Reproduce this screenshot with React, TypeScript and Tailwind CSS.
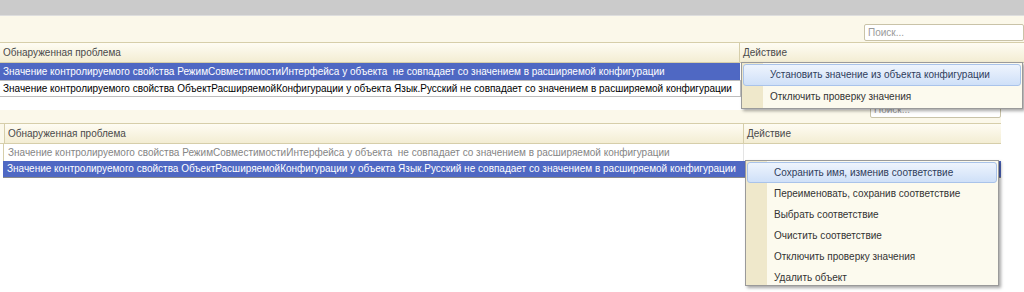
import { FC } from "react";

const font = "font-['Liberation_Sans',Arial,sans-serif]";

const ROW_A =
  "Значение контролируемого свойства РежимСовместимостиИнтерфейса у объекта  не совпадает со значением в расширяемой конфигурации";
const ROW_B =
  "Значение контролируемого свойства ОбъектРасширяемойКонфигурации у объекта Язык.Русский не совпадает со значением в расширяемой конфигурации";

const headerBg =
  "bg-[linear-gradient(to_bottom,#fefcf3,#f3edd3)] border-y border-[#d6ceaa]";

type MenuProps = { items: string[]; rowH: number };

const Menu: FC<MenuProps> = ({ items, rowH }) => (
  <div className="relative h-full border border-[#9a9a9a] bg-[#fcfaee] shadow-[2px_2px_3px_rgba(0,0,0,0.35)]">
    {/* left strip of the menu */}
    <div className="absolute left-0 top-0 bottom-0 w-[21px] bg-[#efe8cb]" />
    <div className="relative flex flex-col p-[1px]">
      {items.map((t, i) => (
        <div
          key={t}
          style={{ height: rowH }}
          className={
            i === 0
              ? "flex items-center pl-[26px] rounded-[3px] border border-[#a9c3ea] bg-[linear-gradient(to_bottom,#eef4fd,#cfe0f8)] text-[#2f3d5c]"
              : "flex items-center pl-[27px] text-[#333]"
          }
        >
          {t}
        </div>
      ))}
    </div>
  </div>
);

const App: FC = () => {
  return (
    <div
      className={`${font} relative w-[1024px] h-[292px] overflow-hidden bg-white text-[10px] leading-none whitespace-pre`}
    >
      {/* first form */}
      <div className="relative h-[101px]">
        <div className="h-[16px] bg-[#cbcbcb] border-b border-[#dedede]" />
        <div className="h-[26px] bg-[#fbf8ea] flex justify-end items-start pt-[8px]">
          <div className="w-[160px] h-[17px] bg-white border border-[#c9c3a8] rounded-[2px] flex items-center pl-[3px] text-[#9a9a9a]">
            Поиск...
          </div>
        </div>
        <div className={`h-[21px] flex ${headerBg} text-[#4a4a4a]`}>
          <div className="w-[740px] flex items-center pl-[3px] border-r border-[#d6ceaa]">
            Обнаруженная проблема
          </div>
          <div className="flex-1 flex items-center pl-[3px]">Действие</div>
        </div>
        <div className="h-[17px] w-[740px] flex items-center pl-[3px] bg-[#4f68c3] text-white">
          {ROW_A}
        </div>
        <div className="h-[17px] w-[741px] flex items-center pl-[3px] border border-[#bdbdbd] border-l-0 text-black">
          {ROW_B}
        </div>
      </div>

      {/* second form */}
      <div className="w-[1001px]">
        <div className="h-[22px] flex justify-end items-start bg-[linear-gradient(to_bottom,#fff_0,#fff_9px,#fbf8ea_9px)]">
          <div className="w-[131px] h-[17px] bg-white border border-[#c9c3a8] rounded-[2px] flex items-center pl-[3px] text-[#9a9a9a]">
            Поиск...
          </div>
        </div>
        <div className={`h-[21px] flex ${headerBg} text-[#4a4a4a]`}>
          <div className="w-[744px] flex items-center pl-[8px] border-r border-[#d6ceaa] shadow-[inset_4px_0_0_#fbf8ea,inset_5px_0_0_#d6ceaa]">
            Обнаруженная проблема
          </div>
          <div className="flex-1 flex items-center pl-[3px]">Действие</div>
        </div>
        <div className="h-[17px] flex ml-[3px] border-l border-[#d6ceaa]">
          <div className="w-[740px] flex items-center pl-[4px] border-r border-[#e4e4e4] text-[#858585]">
            {ROW_A}
          </div>
        </div>
        <div className="h-[17px] flex items-center ml-[3px] pl-[4px] bg-[#4f68c3] text-white border-b border-[#8a8a8a]">
          {ROW_B}
        </div>
      </div>

      {/* context menus over the tables */}
      <div className="absolute left-[741px] top-[62px] w-[282px] h-[47px] z-10">
        <Menu
          rowH={22}
          items={[
            "Установить значение из объекта конфигурации",
            "Отключить проверку значения",
          ]}
        />
      </div>
      <div className="absolute left-[745px] top-[160px] w-[254px] h-[126px] z-10">
        <Menu
          rowH={21}
          items={[
            "Сохранить имя, изменив соответствие",
            "Переименовать, сохранив соответствие",
            "Выбрать соответствие",
            "Очистить соответствие",
            "Отключить проверку значения",
            "Удалить объект",
          ]}
        />
      </div>
    </div>
  );
};

export default App;
